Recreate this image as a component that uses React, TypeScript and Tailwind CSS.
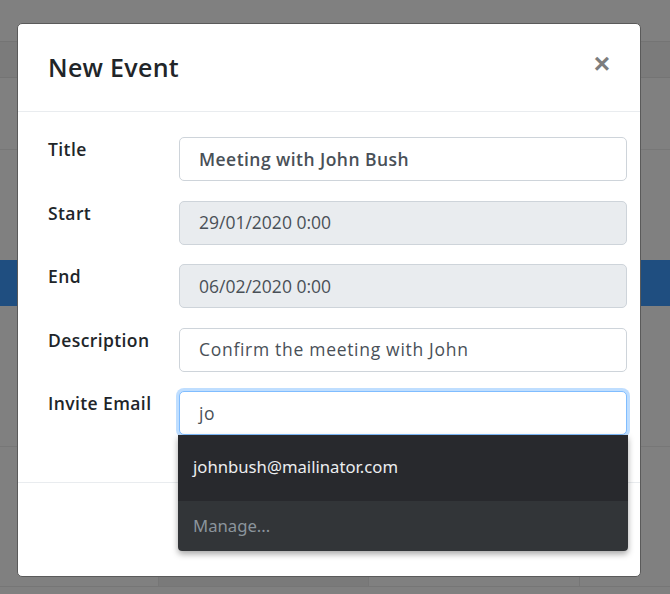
import React, { useState } from "react";

const baseFont = { fontFamily: '"Open Sans", "Noto Sans", sans-serif' };

interface FieldProps {
    label: string;
    value: string;
    disabled?: boolean;
    strong?: boolean;
    tight?: boolean;
}

const Field = ({ label, value, disabled, strong, tight }: FieldProps) => {
    return (
        <div className="flex">
            <label className="w-[131px] shrink-0 text-[17.5px] leading-6 font-semibold text-[#212529] tracking-[0.4px]">
                {label}
            </label>
            <div
                className={`flex h-[44px] w-[448px] items-center rounded-[5px] border border-[#ced4da] pl-[19px] text-[17.5px] text-[#495057] ${
                    disabled ? "bg-[#e9ecef]" : "bg-white"
                } ${strong ? "font-semibold tracking-[0.45px]" : "font-normal"} ${
                    tight ? "tracking-[0px]" : ""
                } ${!strong && !tight ? "tracking-[0.7px]" : ""}`}
            >
                {value}
            </div>
        </div>
    );
};

const App = () => {
    const [query] = useState("jo");

    return (
        <div
            className="relative h-[594px] w-[670px] overflow-hidden bg-[#808080]"
            style={baseFont}
        >
            {/* page behind the backdrop */}
            <div className="flex h-full flex-col">
                <div className="h-[41px] shrink-0" />
                <div className="h-[37px] shrink-0 border-y border-[#747474] bg-[#7b7b7b]" />
                <div className="h-[72px] shrink-0 border-b border-[#777]" />
                <div className="h-[110px] shrink-0" />
                <div className="h-[46px] shrink-0 bg-[#1f4e80]" />
                <div className="h-[141px] shrink-0 border-b border-[#777]" />
                <div className="h-[129px] shrink-0" />
                <div className="flex h-[11px] shrink-0 border-b border-[#767676]">
                    <div className="w-[158px]" />
                    <div className="w-[211px] border-x border-[#767676] bg-[#7a7a7a]" />
                    <div className="w-[211px] border-r border-[#767676]" />
                </div>
            </div>

            {/* modal */}
            <div className="absolute left-[17px] top-[23px] flex h-[554px] w-[624px] flex-col rounded-[5px] border border-[#5a5a5a] bg-white">
                <div className="flex h-[88px] shrink-0 items-center justify-between border-b border-[#e9ecef] pl-[30px] pr-[30px]">
                    <h5 className="mb-[2px] text-[25px] font-semibold leading-[30px] text-[#212529] tracking-[0.3px]">
                        New Event
                    </h5>
                    <button
                        className="mb-[8px] text-[28px] font-bold leading-none text-[#7d7d7d]"
                        style={{ fontFamily: '"Liberation Sans", Arial, sans-serif' }}
                    >
                        ×
                    </button>
                </div>

                <div className="flex h-[370px] shrink-0 flex-col gap-[19.5px] pl-[30px] pt-[25px]">
                    <Field label="Title" value="Meeting with John Bush" strong />
                    <Field label="Start" value="29/01/2020 0:00" disabled tight />
                    <Field label="End" value="06/02/2020 0:00" disabled tight />
                    <Field label="Description" value="Confirm the meeting with John" />
                    <div className="relative flex">
                        <label className="w-[131px] shrink-0 text-[17.5px] leading-6 font-semibold text-[#212529] tracking-[0.4px]">
                            Invite Email
                        </label>
                        <div className="flex h-[44px] w-[448px] items-center rounded-[5px] border border-[#80bdff] bg-white pl-[19px] text-[17.5px] text-[#495057] tracking-[0.5px] shadow-[0_0_0_3px_rgba(0,123,255,0.25)]">
                            {query}
                        </div>

                        {/* autocomplete list */}
                        <div
                            className="absolute left-[130px] top-[44px] z-10 w-[450px] overflow-hidden rounded-b-[4px] shadow-[0_3px_6px_rgba(0,0,0,0.35)]"
                            style={{ fontFamily: '"Noto Sans", "Open Sans", sans-serif' }}
                        >
                            <div className="flex h-[66px] items-center bg-[#28292d] pb-[3px] pl-[15px] text-[16.7px] text-[#eceef0]">
                                johnbush@mailinator.com
                            </div>
                            <div className="flex h-[50px] items-center bg-[#323538] pl-[15px] text-[16.7px] text-[#8b949c]">
                                Manage...
                            </div>
                        </div>
                    </div>
                </div>

                <div className="flex-1 border-t border-[#e9ecef]" />
            </div>
        </div>
    );
};

export default App;
